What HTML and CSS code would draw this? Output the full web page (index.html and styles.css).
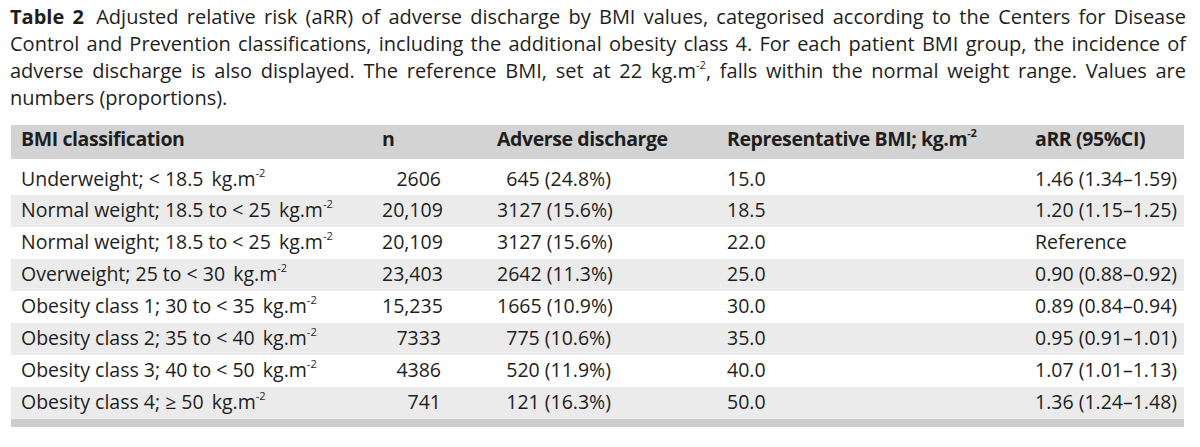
FILE: index.html
```html
<!DOCTYPE html>
<html lang="en">
<head>
<meta charset="utf-8">
<title>Table 2</title>
<link rel="stylesheet" href="styles.css">
</head>
<body>
<div class="figure">
  <p class="caption"><b class="label">Table 2</b> Adjusted relative risk (aRR) of adverse discharge by BMI values, categorised according to the Centers for Disease Control and Prevention classifications, including the additional obesity class 4. For each patient BMI group, the incidence of adverse discharge is also displayed. The reference BMI, set at 22 kg.m<sup>-2</sup>, falls within the normal weight range. Values are numbers (proportions).</p>
  <table class="data">
    <colgroup>
      <col class="c1"><col class="c2"><col class="c3"><col class="c4"><col class="c5">
    </colgroup>
    <thead>
      <tr>
        <th>BMI classification</th>
        <th>n</th>
        <th>Adverse discharge</th>
        <th>Representative BMI; kg.m<sup>-2</sup></th>
        <th>aRR (95%CI)</th>
      </tr>
    </thead>
    <tbody>
      <tr class="first">
        <td>Underweight; &lt; 18.5 <span class="gap">kg.m<sup>-2</sup></span></td>
        <td><span class="num n">2606</span></td>
        <td><span class="num ad">645 (24.8%)</span></td>
        <td>15.0</td>
        <td><span class="num rr">1.46 (1.34–1.59)</span></td>
      </tr>
      <tr class="alt">
        <td>Normal weight; 18.5 to &lt; 25 <span class="gap">kg.m<sup>-2</sup></span></td>
        <td><span class="num n">20,109</span></td>
        <td><span class="num ad">3127 (15.6%)</span></td>
        <td>18.5</td>
        <td><span class="num rr">1.20 (1.15–1.25)</span></td>
      </tr>
      <tr>
        <td>Normal weight; 18.5 to &lt; 25 <span class="gap">kg.m<sup>-2</sup></span></td>
        <td><span class="num n">20,109</span></td>
        <td><span class="num ad">3127 (15.6%)</span></td>
        <td>22.0</td>
        <td>Reference</td>
      </tr>
      <tr class="alt">
        <td>Overweight; 25 to &lt; 30 <span class="gap">kg.m<sup>-2</sup></span></td>
        <td><span class="num n">23,403</span></td>
        <td><span class="num ad">2642 (11.3%)</span></td>
        <td>25.0</td>
        <td><span class="num rr">0.90 (0.88–0.92)</span></td>
      </tr>
      <tr>
        <td>Obesity class 1; 30 to &lt; 35 <span class="gap">kg.m<sup>-2</sup></span></td>
        <td><span class="num n">15,235</span></td>
        <td><span class="num ad">1665 (10.9%)</span></td>
        <td>30.0</td>
        <td><span class="num rr">0.89 (0.84–0.94)</span></td>
      </tr>
      <tr class="alt">
        <td>Obesity class 2; 35 to &lt; 40 <span class="gap">kg.m<sup>-2</sup></span></td>
        <td><span class="num n">7333</span></td>
        <td><span class="num ad">775 (10.6%)</span></td>
        <td>35.0</td>
        <td><span class="num rr">0.95 (0.91–1.01)</span></td>
      </tr>
      <tr>
        <td>Obesity class 3; 40 to &lt; 50 <span class="gap">kg.m<sup>-2</sup></span></td>
        <td><span class="num n">4386</span></td>
        <td><span class="num ad">520 (11.9%)</span></td>
        <td>40.0</td>
        <td><span class="num rr">1.07 (1.01–1.13)</span></td>
      </tr>
      <tr class="alt">
        <td>Obesity class 4; ≥ 50 <span class="gap">kg.m<sup>-2</sup></span></td>
        <td><span class="num n">741</span></td>
        <td><span class="num ad">121 (16.3%)</span></td>
        <td>50.0</td>
        <td><span class="num rr">1.36 (1.24–1.48)</span></td>
      </tr>
    </tbody>
    <tfoot>
      <tr class="band"><td colspan="5"></td></tr>
    </tfoot>
  </table>
</div>
</body>
</html>
```

FILE: styles.css
```css
html, body {
  margin: 0;
  padding: 0;
  background: #ffffff;
}

body {
  font-family: "Open Sans", "Noto Sans", "Liberation Sans", sans-serif;
  color: #1e1e1e;
}

.figure {
  padding: 3px 14px 0 10px;
}

.caption {
  margin: 0;
  font-size: 20px;
  line-height: 27px;
  text-align: justify;
}

.caption .label {
  font-weight: 700;
  margin-right: 4px;
}

sup {
  font-size: 11px;
  line-height: 0;
  vertical-align: 9px;
}

.data {
  margin: 14px 0 0 1px;
  width: 1173px;
  border-collapse: collapse;
  table-layout: fixed;
  font-size: 19.5px;
}

.c1 { width: 361px; }
.c2 { width: 115px; }
.c3 { width: 230px; }
.c4 { width: 308px; }
.c5 { width: 159px; }

.data th {
  background: #d3d3d3;
  font-weight: 700;
  letter-spacing: -0.4px;
  text-align: left;
  height: 34px;
  padding: 0 0 7px 10px;
  box-sizing: border-box;
  vertical-align: middle;
  white-space: nowrap;
}

.data td {
  height: 32px;
  padding: 0 0 4px 10px;
  box-sizing: border-box;
  vertical-align: middle;
  white-space: nowrap;
  text-align: left;
}

.data tr.first td {
  height: 36px;
  padding-top: 5px;
  padding-bottom: 2px;
}

.data tr.alt td {
  background: #ebebeb;
}

.gap {
  margin-left: 3px;
}

.num {
  display: inline-block;
  text-align: right;
}

.num.n { width: 59px; }
.num.ad { width: 114px; }
.num.rr { width: 139px; }

.data tr.band td {
  height: 8px;
  padding: 0;
  background: #cccccc;
}
```
